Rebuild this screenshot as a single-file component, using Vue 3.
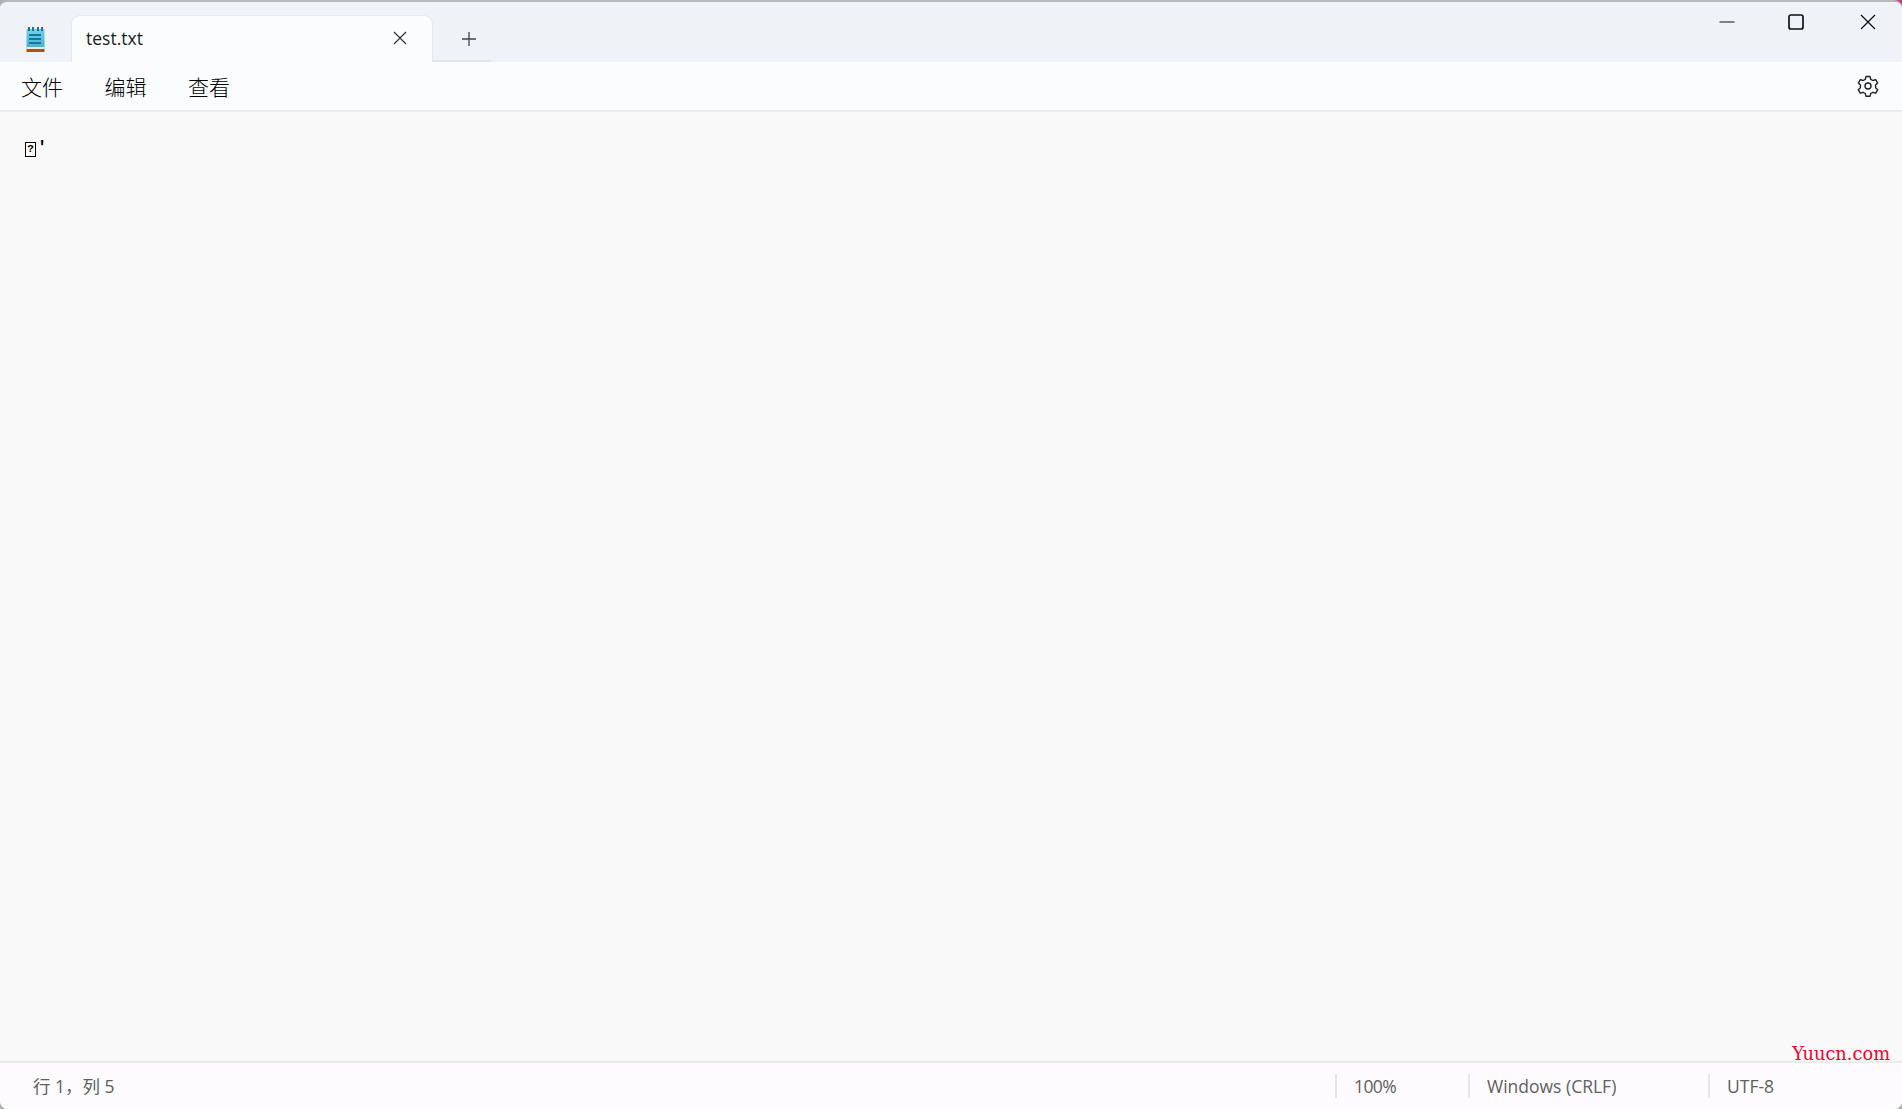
<template>
  <div class="window">
    <div class="titlebar">
      <div class="app-icon">
        <svg width="19" height="25" viewBox="0 0 19 25">
          <defs>
            <linearGradient id="pad" x1="0" y1="0" x2="0" y2="1">
              <stop offset="0" stop-color="#72cfe8" />
              <stop offset="1" stop-color="#46aed2" />
            </linearGradient>
          </defs>
          <rect x="0.5" y="2" width="18" height="20" fill="url(#pad)" />
          <rect x="2" y="0" width="2" height="4" fill="#0f7a9e" />
          <rect x="6" y="0" width="2" height="4" fill="#0f7a9e" />
          <rect x="11" y="0" width="2" height="4" fill="#0f7a9e" />
          <rect x="15" y="0" width="2" height="4" fill="#0f7a9e" />
          <rect x="3" y="7" width="12" height="2" fill="#12789c" />
          <rect x="3" y="11" width="12" height="2" fill="#12789c" />
          <rect x="3" y="15" width="12" height="2" fill="#12789c" />
          <rect x="0.5" y="20" width="18" height="2" fill="#ece8e2" />
          <rect x="0.5" y="22" width="18" height="3" fill="#ab5410" />
        </svg>
      </div>
      <div class="tab">
        <span class="tab-title">test.txt</span>
        <svg class="tab-close" width="14" height="14" viewBox="0 0 14 14">
          <path d="M1 1 L13 13 M13 1 L1 13" stroke="#333" stroke-width="1.2" fill="none" />
        </svg>
      </div>
      <div class="new-tab">
        <svg width="16" height="16" viewBox="0 0 16 16">
          <path d="M8 1 V15 M1 8 H15" stroke="#444" stroke-width="1.3" fill="none" />
        </svg>
      </div>
      <div class="controls">
        <svg width="16" height="16" viewBox="0 0 16 16">
          <path d="M0.5 8 H15.5" stroke="#111" stroke-width="1.2" fill="none" />
        </svg>
        <svg width="16" height="16" viewBox="0 0 16 16">
          <rect x="1" y="1" width="14" height="14" rx="2" stroke="#111" stroke-width="1.7" fill="none" />
        </svg>
        <svg class="close" width="16" height="16" viewBox="0 0 16 16">
          <path d="M1 1 L15 15 M15 1 L1 15" stroke="#111" stroke-width="1.3" fill="none" />
        </svg>
      </div>
    </div>

    <div class="menubar">
      <span v-for="m in menus" :key="m" class="menu-item">{{ m }}</span>
      <svg class="gear" width="24" height="24" viewBox="0 0 24 24">
        <path
          d="M10 2.5 h4 l0.7 2.8 2.2 1.2 2.8-.8 2 3.4 -2.1 2 v2.6 l2.1 2 -2 3.4 -2.8-.8 -2.2 1.2 -0.7 2.8 h-4 l-.7-2.8 -2.2-1.2 -2.8.8 -2-3.4 2.1-2 v-2.6 l-2.1-2 2-3.4 2.8.8 2.2-1.2 z"
          stroke="#222" stroke-width="1.4" stroke-linejoin="round" fill="none"
        />
        <circle cx="12" cy="12" r="3" stroke="#222" stroke-width="1.4" fill="none" />
      </svg>
    </div>

    <div class="editor">
      <div class="editor-text">
        <span class="missing">?</span><span class="quote">'</span>
      </div>
      <span class="watermark">Yuucn.com</span>
    </div>

    <div class="statusbar">
      <span class="pos">行 1，列 5</span>
      <span class="cell zoom-cell">100%</span>
      <span class="cell eol-cell">Windows (CRLF)</span>
      <span class="cell enc-cell">UTF-8</span>
    </div>
  </div>
</template>

<script setup>
const menus = ['文件', '编辑', '查看']
</script>

<style>
html, body {
  background: radial-gradient(circle 14px at 100% 0, #c2457f 55%, transparent 60%), #b0b0b0;
}
</style>

<style scoped>
.window {
  width: 1902px; height: 1109px;
  display: flex; flex-direction: column;
  box-sizing: border-box;
  border-top: 2px solid #b7b9ba;
  border-radius: 8px;
  overflow: hidden;
  background: #f9f9f9;
  font-family: "Open Sans", "Noto Sans CJK SC", sans-serif;
  color: #1b1b1b;
}
.titlebar {
  height: 60px; flex: none;
  display: flex; align-items: flex-end;
  background: #eff3f7;
}
.app-icon { width: 71px; padding: 0 0 10px 26px; box-sizing: border-box; }
.app-icon svg { display: block; }
.tab {
  width: 362px; height: 47px;
  box-sizing: border-box;
  display: flex; align-items: center; justify-content: space-between;
  padding: 0 25px 2px 14px;
  background: #fbfcfe;
  border: 1px solid #e6e9ec; border-bottom: none;
  border-radius: 9px 9px 0 0;
}
.tab-title { font-size: 17.5px; font-weight: 500; }
.tab-close { display: block; margin-bottom: 1px; }
.new-tab {
  width: 58px; height: 47px;
  display: flex; align-items: center;
  padding: 2px 0 0 28px;
  box-sizing: border-box;
  border-bottom: 2px solid #e3e5e8;
}
.controls {
  margin-left: auto; align-self: flex-start;
  display: flex; gap: 53px;
  padding: 12px 26px 0 0;
}
.controls svg { display: block; }
.controls .close { margin-left: 3px; }
.menubar {
  height: 50px; flex: none;
  box-sizing: border-box;
  display: flex; align-items: center;
  gap: 41.5px;
  padding: 0 22px 1px 21px;
  background: #fbfcfe;
  border-bottom: 2px solid #ececec;
  font-family: "Noto Sans CJK SC", sans-serif;
}
.menu-item { font-size: 21px; font-weight: 300; line-height: 30px; color: #000; }
.gear { margin-left: auto; display: block; }
.editor {
  flex: 1; position: relative;
  padding: 28px 0 0 25px;
  background: #f9f9f9;
}
.editor-text { display: flex; align-items: flex-start; height: 20px; }
.missing {
  width: 11px; height: 15px;
  box-sizing: border-box;
  margin-top: 2px;
  border: 1.5px solid #000;
  background: #fff;
  font: bold 11px/12px "Liberation Mono", monospace;
  color: #000;
  text-align: center;
}
.quote {
  margin-left: 1px;
  font: bold 17px/15px "Liberation Mono", monospace;
  color: #000;
  width: 7px;
}
.watermark {
  position: absolute; right: 12px; bottom: -4px;
  font: 17.8px/22px "DejaVu Serif", serif;
  color: #f5002a;
}
.statusbar {
  height: 48px; flex: none;
  box-sizing: border-box;
  display: flex; align-items: center;
  padding-left: 33px;
  background: #fdfbfd;
  border-top: 2px solid #ececec;
  font-size: 17.5px;
  color: #5f5f5f;
}
.pos { margin-right: auto; line-height: 24px; }
.cell {
  height: 24px; line-height: 24px;
  box-sizing: border-box;
  padding-left: 17px;
  border-left: 2px solid #e6e6e6;
}
.zoom-cell { width: 133px; letter-spacing: -0.6px; }
.eol-cell { width: 240px; }
.enc-cell { width: 194px; }
</style>
